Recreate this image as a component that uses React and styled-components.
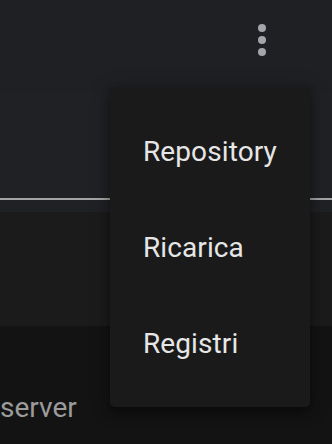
import React from "react";
import styled, { createGlobalStyle } from "styled-components";

const Global = createGlobalStyle`
  html, body { margin: 0; padding: 0; background: #131313; }
  body { font-family: Roboto, "Noto Sans", sans-serif; overflow: hidden; }
  #root { width: 332px; height: 444px; }
`;

const Page = styled.div`
  position: relative;
  width: 332px;
  height: 444px;
  display: flex;
  flex-direction: column;
  background: #131313;
  overflow: hidden;
`;

const Header = styled.header`
  height: 93px;
  flex: none;
  background: #1f2023;
  display: flex;
  align-items: flex-start;
  justify-content: flex-end;
  padding: 16px 54px 0 0;
  box-sizing: border-box;
`;

const IconButton = styled.button`
  width: 32px;
  height: 48px;
  border: none;
  background: transparent;
  padding: 0;
  display: flex;
  align-items: center;
  justify-content: center;
`;

const Field = styled.div`
  height: 119px;
  flex: none;
  background: #202124;
  display: flex;
  flex-direction: column;
  justify-content: flex-end;
  padding-bottom: 12px;
  box-sizing: border-box;
`;

const Underline = styled.div`
  height: 2px;
  background: #a4a4a4;
`;

const Section = styled.div`
  height: 114px;
  flex: none;
  background: #1b1b1b;
`;

const ListArea = styled.div`
  flex: 1;
  background: #131313;
  display: flex;
  align-items: flex-end;
  padding-bottom: 22px;
  box-sizing: border-box;
`;

const RowLabel = styled.span`
  font-size: 28px;
  color: #9c9c9c;
  line-height: 1;
  white-space: nowrap;
`;

const Menu = styled.ul`
  position: absolute;
  top: 87px;
  left: 110px;
  width: 200px;
  margin: 0;
  padding: 16px 0;
  list-style: none;
  background: #1a1a1a;
  border-radius: 5px;
  box-shadow: 0 5px 10px rgba(0, 0, 0, 0.35), 0 2px 20px rgba(0, 0, 0, 0.25);
`;

const MenuItem = styled.li`
  height: 96px;
  display: flex;
  align-items: center;
  padding-left: 33px;
  font-size: 28px;
  color: #e6e6e6;
  letter-spacing: 0.1px;
`;

function DotsIcon() {
  return (
    <svg width="10" height="34" viewBox="0 0 10 34">
      <circle cx="5" cy="5" r="4" fill="#a3a5aa" />
      <circle cx="5" cy="17" r="4" fill="#a3a5aa" />
      <circle cx="5" cy="29" r="4" fill="#a3a5aa" />
    </svg>
  );
}

export default function App() {
  return (
    <>
      <Global />
      <Page>
        <Header>
          <IconButton aria-label="Altre opzioni">
            <DotsIcon />
          </IconButton>
        </Header>
        <Field>
          <Underline />
        </Field>
        <Section />
        <ListArea>
          <RowLabel>server</RowLabel>
        </ListArea>
        <Menu>
          <MenuItem>Repository</MenuItem>
          <MenuItem>Ricarica</MenuItem>
          <MenuItem>Registri</MenuItem>
        </Menu>
      </Page>
    </>
  );
}
